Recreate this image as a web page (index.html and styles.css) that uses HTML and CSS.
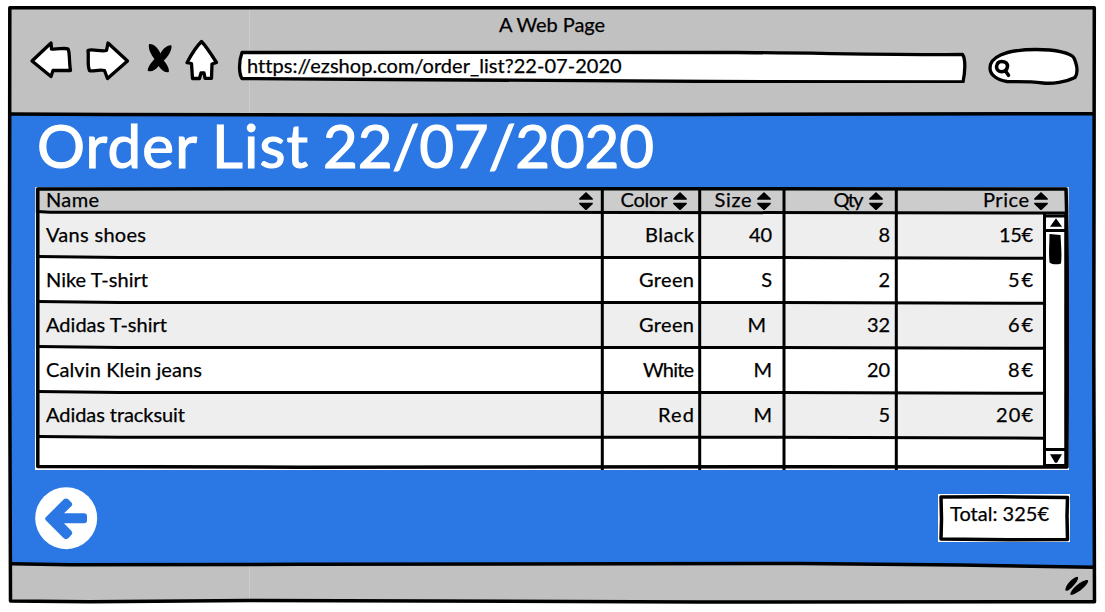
FILE: index.html
```html
<!DOCTYPE html>
<html lang="en">
<head>
<meta charset="utf-8">
<title>A Web Page</title>
<link rel="stylesheet" href="styles.css">
</head>
<body>
<svg class="symbols" width="0" height="0">
  <symbol id="sort" viewBox="0 0 14 18"><path d="M7 0 13.800 6.500V7.700H.2V6.500zM.2 10.800h13.600v1.300L7.500 18h-1L.2 12.100z"/></symbol>
</svg>
<div class="window">
  <svg class="frame" viewBox="0 0 1105 612">
    <path class="chrome" d="M10 8H1094V601.5L700 602 250 600 100 601.5 10.500 601z"/>
    <path class="blue" d="M11 114.500H1094V567L800 563.500 250 564.500 11 563.500z"/>
    <path class="seam" d="M249.500 10V113M249.500 566V599"/>
    <path class="ink" d="M9.800 7.800H1094.300L1093.800 350 1094.500 601.800 700 602 430 601 250 600.500 90 601.800 10.500 601 9.500 300z"/>
    <path class="ink" d="M11 114 110 114.500 400 115 700 114.500 1093 113.700M11.500 563.700 70 564.800 300 564.300 800 563.500 960 565 1093 567.300"/>
    <path class="grip" d="M1065.300 590.500C1065 585 1072.500 577.500 1077.500 576.700 1080.500 578.500 1072 588.500 1067.500 590.800zM1070.500 595C1069.500 589.500 1082.500 579.500 1087.500 580 1091.500 581.500 1077.500 595 1070.500 595z"/>
  </svg>
  <header class="bar">
    <div class="bar-title"><span data-w="106">A Web Page</span></div>
    <div class="tools">
      <svg class="nav" viewBox="0 0 200 50">
        <g class="ink white">
          <path d="M5 26 24 8 24.500 14 C31 14.500 38 12.500 41 14 43 17 42 28 43.500 35.500L26 35.500 24 41.500z"/>
          <path d="M61 15.500C65 13.500 74 17 79.500 15.500L81 8 100.500 26 80.500 43.500 77.500 35.500C72 34 65 37 62.500 35.500 60 30 62 22 61 15.500z"/>
          <path d="M174.500 6.500C179 11 186 22 189.500 27.500L185 29 184.500 43.300H178L177 38H174L172.500 43.500H165.500L164.500 28.500 160 27.700C164 20 169 12 174.500 6.500z"/>
        </g>
        <path d="M122 9C127 8.500 131.500 13.500 133.500 18.500 136 13.500 141 9.500 144.500 10.500 145 16 141 21.500 136.800 25.500 140 29.500 142.500 33.500 141.800 37 137.500 38 134 34.500 131.700 31 128.500 35 124.500 37.500 120.700 35.800 121 31 124.500 27.500 127.500 24 124 19.500 121 14 122 9z"/>
      </svg>
      <div class="address">
        <svg class="outline" viewBox="0 0 730 34"><path class="ink white" d="M5 3.500C170 3.500 340 2.500 500 3.500 580 4 660 6 725.500 5.500 729 10 728 24 726 33 550 32.500 300 32.500 150 30.500L5 29.500C2 25 1.500 13 5 3.500z"/></svg>
        <span data-w="374">https://ezshop.com/order_list?22-07-2020</span>
      </div>
      <svg class="search" viewBox="0 0 92 40"><path class="ink white" d="M3 22C3 12 16 3.500 49 3.500 69 3.500 84 7 87 12 90 19 91 27 88 31.500 79 36 65 38 56 37 40 35 28 36 20 35.500 10 34 3 29 3 22z"/><path class="ink none" d="M14.500 15.500C18.500 15.500 20.500 17.500 20.500 20.500 20 24 18 25.700 14.500 25.700 11.500 25.500 9.500 23.500 9.500 20.500 10 17.500 12 15.500 14.500 15.500zM18.500 25 21.500 29.300"/></svg>
    </div>
  </header>
  <main class="page">
    <h1><span data-w="160">Order</span> <span data-w="96">List</span> <span data-w="331">22/07/2020</span></h1>
    <section class="table">
      <div class="row head">
        <div class="name"><span data-w="53">Name</span><svg><use href="#sort"/></svg></div>
        <div><span data-w="47">Color</span><svg><use href="#sort"/></svg></div>
        <div><span data-w="37">Size</span><svg><use href="#sort"/></svg></div>
        <div><span data-w="30">Qty</span><svg><use href="#sort"/></svg></div>
        <div class="price"><span data-w="46">Price</span><svg><use href="#sort"/></svg></div>
      </div>
      <div class="row shade">
        <div class="name"><span data-w="100">Vans shoes</span></div><div><span data-w="49">Black</span></div><div class="size"><span data-w="23">40</span></div><div><span>8</span></div><div class="price"><span data-w="34">15€</span></div>
      </div>
      <div class="row">
        <div class="name"><span data-w="102">Nike T-shirt</span></div><div><span data-w="55">Green</span></div><div class="size"><span>S</span></div><div><span>2</span></div><div class="price"><span data-w="25">5€</span></div>
      </div>
      <div class="row shade">
        <div class="name"><span data-w="121">Adidas T-shirt</span></div><div><span data-w="55">Green</span></div><div class="size inset"><span>M</span></div><div><span data-w="23">32</span></div><div class="price"><span data-w="25">6€</span></div>
      </div>
      <div class="row">
        <div class="name"><span data-w="156">Calvin Klein jeans</span></div><div><span data-w="51">White</span></div><div class="size"><span>M</span></div><div><span data-w="23">20</span></div><div class="price"><span data-w="25">8€</span></div>
      </div>
      <div class="row shade">
        <div class="name"><span data-w="139">Adidas tracksuit</span></div><div><span data-w="36">Red</span></div><div class="size"><span>M</span></div><div><span>5</span></div><div class="price"><span data-w="37">20€</span></div>
      </div>
      <svg class="rules" viewBox="35 187 1034 283">
        <path class="gutter" d="M1046 215H1064V465H1046z"/>
        <path class="thin" d="M602.300 188V470M699.700 188V470M784 188V470M896.300 188V470M1044.500 214V466"/>
        <path class="thin" d="M37 211.500 50 212.300H500L1067 213M38 256.500 120 257.500H780L1044 258.300M38 301.500 120 302.500H780L1044 303.300M38 346.500 120 347.500H780L1044 348.300M38 391.500 120 392.500H780L1044 393.300M38 436.500 120 437.300H780L1044 438.200"/>
        <path class="ink none" d="M37.800 189 400 188.700 1066 189C1068.500 260 1067 400 1067 467L800 466.700 300 467.200 37.800 466.500z"/>
        <path class="ink none" d="M1066 214V466"/>
        <path class="thin" d="M1044 216H1066M1044 230.500H1066M1044 449.500H1066M1044 465.500H1066"/>
        <path d="M1050 226.800 1056 218.200 1062 226.800zM1050 454.300H1062L1057 462.800H1055zM1049.500 234 1060.500 235C1061 244 1062 255 1061 263.500 1057 265 1052 264.500 1049.500 262.500 1048.500 252 1049.500 243 1049.500 234z"/>
      </svg>
    </section>
    <div class="actions">
      <svg class="back" viewBox="0 0 63 63"><circle cx="31.200" cy="31.200" r="31"/><path d="M11 30 28.500 12.500Q31 10.300 33.500 12.500L36 15Q38.500 17.500 36 19.500L29 26.300H49Q52 26.300 52 29.500V33.500Q52 36.300 49 36.300H29L36 43.500Q38.500 46 36 48.200L33.500 51Q31 53.300 28.500 51L11 33.500Q9.300 31.700 11 30z"/></svg>
      <div class="total">
        <svg class="outline" viewBox="0 0 132 48"><path class="ink none box" d="M3 3 60 2.700 129.500 3.500 129 22 129.500 45.500 70 45.800 3 45 3.500 25z"/></svg>
        <span data-w="99">Total: 325€</span>
      </div>
    </div>
  </main>
</div>
<script src="fit.js"></script>
</body>
</html>
```
FILE: styles.css
```css
body {
  margin: 0;
  background: #fff;
  color: #000;
  font: 20px/24px Lato, "Open Sans", sans-serif;
  -webkit-text-stroke: 0.25px currentColor;
}
.symbols { position: absolute; }
.window {
  position: relative;
  box-sizing: border-box;
  width: 1105px;
  height: 612px;
  overflow: hidden;
}
.frame { position: absolute; inset: 0; z-index: -1; width: 1105px; height: 612px; }
.chrome { fill: #c1c1c1; }
.blue { fill: #2b78e4; }
.seam { stroke: #cdcdcd; }
.grip { fill: #000; }
.ink { fill: none; stroke: #000; stroke-width: 3.5; stroke-linejoin: round; stroke-linecap: round; }
.white, .white path { fill: #fff; stroke-width: 3.3; }
.bar { height: 115px; padding-top: 12px; box-sizing: border-box; }
.bar-title { height: 25px; text-align: center; margin-right: 1px; }
.tools { display: flex; align-items: flex-start; }
.nav { width: 200px; height: 50px; margin: -2px 0 0 27px; }
.address {
  position: relative;
  box-sizing: border-box;
  width: 730px;
  height: 34px;
  margin: 12px 0 0 10px;
  padding: 4px 0 0 10px;
}
.outline { position: absolute; inset: 0; z-index: -1; width: 100%; height: 100%; }
.search { width: 92px; height: 40px; margin: 9px 0 0 20px; }
.page { padding: 0 36px 0 35px; }
h1 {
  display: flex;
  gap: 15px;
  height: 72px;
  margin: 0;
  padding-left: 2px;
  color: #fff;
  font-size: 60px;
  font-weight: 400;
  line-height: 61px;
  -webkit-text-stroke: 1.2px #fff;
}
span { white-space: nowrap; }
.table {
  position: relative;
  box-sizing: border-box;
  width: 1034px;
  height: 283px;
  background: #fff;
}
.rules { position: absolute; inset: 0; width: 1034px; height: 283px; }
.rules .thin { fill: none; stroke: #000; stroke-width: 3; }
.none { fill: none; }
.gutter { fill: #fff; }
.row {
  display: grid;
  grid-template-columns: 567px 98px 84px 112px 173px;
  height: 45px;
}
.row > div { display: flex; justify-content: flex-end; align-items: center; padding: 0 6px 3px 0; }
.row > .name { justify-content: space-between; padding: 0 9px 3px 11px; }
.row > .size { padding-right: 12px; }
.row > .inset { padding-right: 18px; }
.row > .price { padding-right: 36px; }
.head { height: 26px; background: #ccc; }
.row.head > div { gap: 5px; padding-right: 13.5px; }
.row.head > .name { padding-right: 9px; }
.row.head > .price { padding-right: 21px; }
.head svg { width: 14px; height: 18px; margin-top: 4px; }
.shade { background: #eee; }
.actions { display: flex; justify-content: space-between; width: 1035px; padding-top: 17px; }
.back { width: 63px; height: 63px; }
.back circle { fill: #fff; }
.back path { fill: #2b78e4; }
.total {
  position: relative;
  z-index: 0;
  box-sizing: border-box;
  width: 132px;
  height: 48px;
  margin-top: 7px;
  padding: 7px 0 0 12px;
  background: #fff;
}
```
FILE: fit.js
```js
// Spaces each label's letters so that it fills its data-w width in pixels.
document.querySelectorAll("[data-w]").forEach(function (label) {
  label.style.display = "inline-block";
  label.style.flex = "none";
  var gap = (Number(label.dataset.w) - label.getBoundingClientRect().width) / (label.textContent.length - 1);
  label.style.letterSpacing = gap + "px";
  label.style.marginRight = -gap + "px";
});
```
